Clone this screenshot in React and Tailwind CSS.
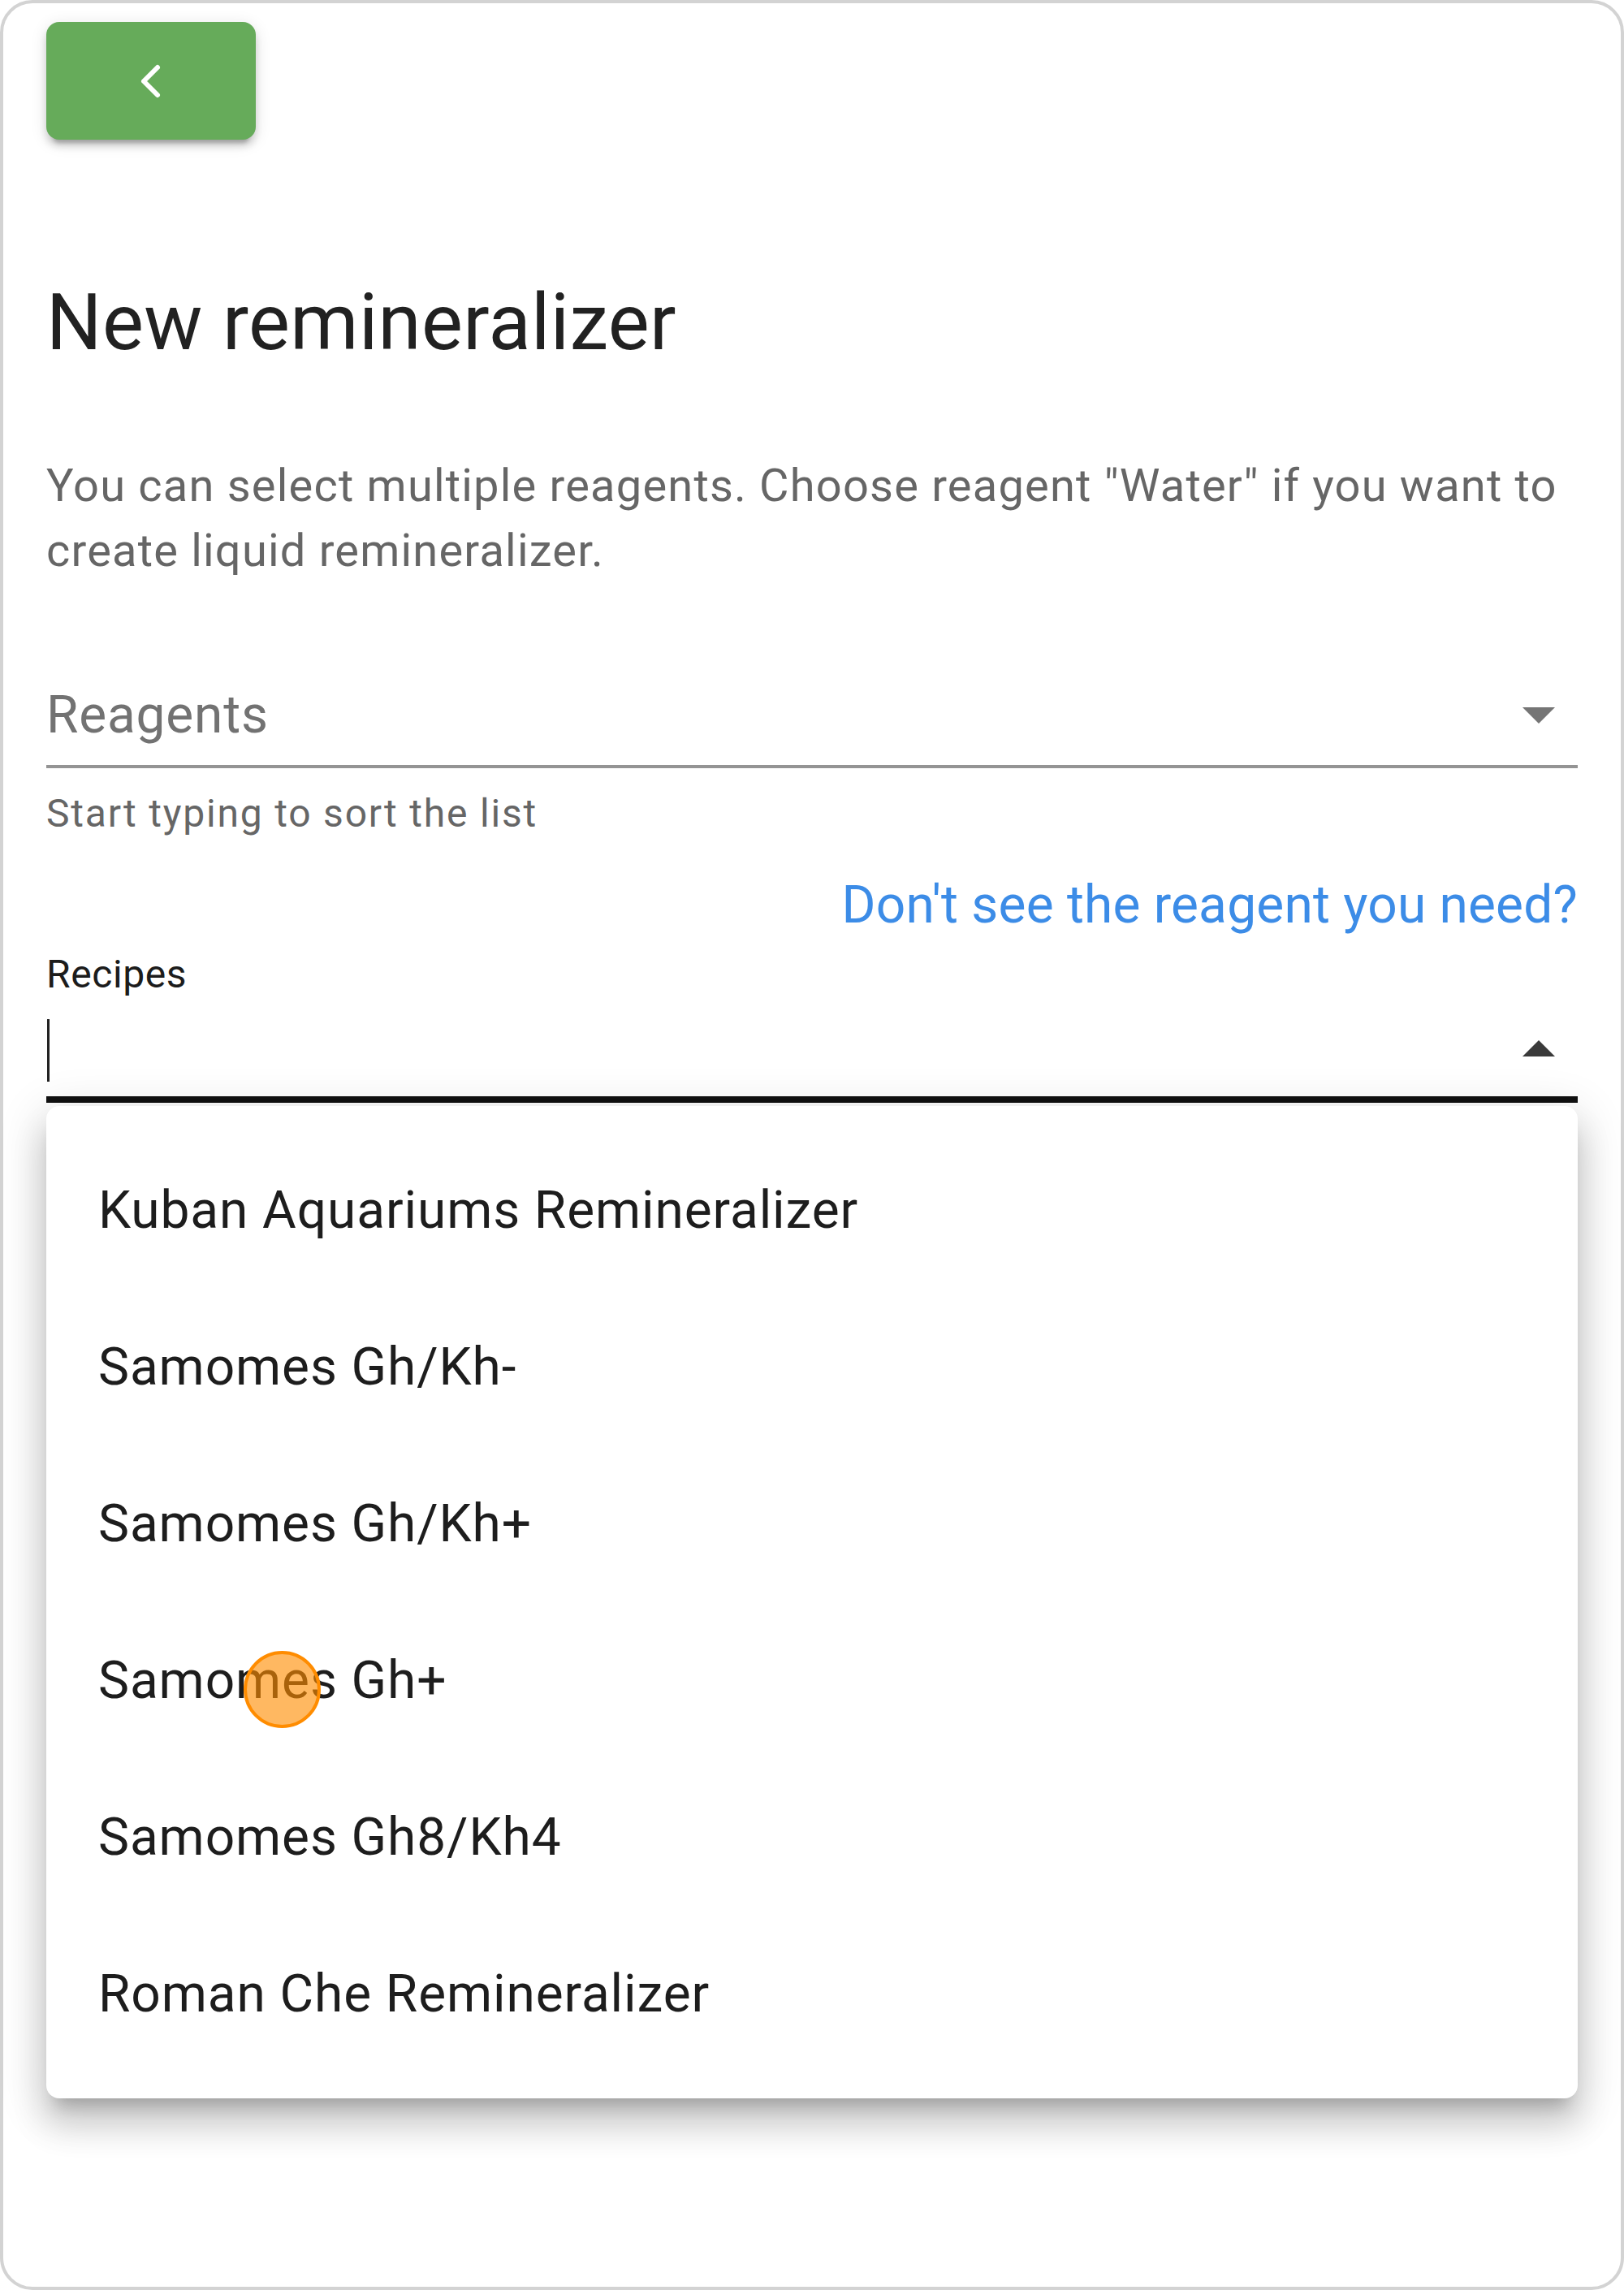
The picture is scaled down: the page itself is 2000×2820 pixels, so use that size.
import React from "react";

const recipes = [
  "Kuban Aquariums Remineralizer",
  "Samomes Gh/Kh-",
  "Samomes Gh/Kh+",
  "Samomes Gh+",
  "Samomes Gh8/Kh4",
  "Roman Che Remineralizer",
];

function BackButton() {
  return (
    <button className="flex h-[145px] w-[258px] items-center justify-center rounded-[16px] bg-[#66ab5a] shadow-[0_12px_4px_-8px_rgba(0,0,0,0.2),0_8px_8px_0_rgba(0,0,0,0.14),0_4px_20px_0_rgba(0,0,0,0.12)]">
      <svg width="30" height="44" viewBox="0 0 30 44" fill="none" className="-ml-[2px]">
        <path
          d="M24 5 L7 22 L24 39"
          stroke="#ffffff"
          strokeWidth="6"
          strokeLinecap="round"
          strokeLinejoin="round"
        />
      </svg>
    </button>
  );
}

function Caret({ up, color }) {
  return (
    <svg width="40" height="20" viewBox="0 0 40 20">
      {up ? (
        <polygon points="0,20 40,20 20,0" fill={color} />
      ) : (
        <polygon points="0,0 40,0 20,20" fill={color} />
      )}
    </svg>
  );
}

export default function App() {
  return (
    <div className="relative h-[2820px] w-[2000px] rounded-[40px] border-4 border-[#d3d3d3] bg-white px-[53px] pt-[23px] font-['Roboto',sans-serif]">
      <BackButton />

      {/* Title */}
      <h1 className="mt-[161px] text-[96px] leading-[128px] font-normal tracking-[0.4px] text-[#212121]">
        New remineralizer
      </h1>

      {/* Description */}
      <p className="mt-[97px] text-[56px] leading-[80px] tracking-[1.2px] text-[#666666]">
        You can select multiple reagents. Choose reagent "Water" if you want to
        create liquid remineralizer.
      </p>

      {/* Reagents select */}
      <div className="mt-[115px] border-b-4 border-[#949494] pb-[13px]">
        <div className="flex h-[96px] items-center justify-between pr-[28px]">
          <span className="text-[64px] leading-[96px] tracking-[0.8px] text-[#727272]">
            Reagents
          </span>
          <Caret color="#757575" />
        </div>
      </div>
      <p className="mt-[24px] text-[48px] leading-[64px] tracking-[1.8px] text-[#666666]">
        Start typing to sort the list
      </p>

      {/* Link */}
      <div className="mt-[33px] flex justify-end">
        <a className="text-[64px] leading-[96px] tracking-[0.2px] text-[#3c8ce7]">
          Don't see the reagent you need?
        </a>
      </div>

      {/* Recipes autocomplete (focused, open) */}
      <div className="relative mt-[5px]">
        <label className="block text-[48px] leading-[64px] tracking-[0.6px] text-[#1c1c1c]">
          Recipes
        </label>
        <div className="flex h-[126px] items-center justify-between border-b-8 border-[#111111] pr-[28px]">
          <span className="mt-[4px] ml-[1px] block h-[77px] w-[3px] bg-[#222222]" />
          <Caret up color="#3a3a3a" />
        </div>

        {/* Dropdown menu */}
        <ul className="absolute top-full right-0 left-0 mt-[4px] rounded-[16px] bg-white py-[32px] shadow-[0_20px_20px_-12px_rgba(0,0,0,0.2),0_32px_40px_4px_rgba(0,0,0,0.14),0_12px_56px_8px_rgba(0,0,0,0.12)]">
          {recipes.map((r) => (
            <li
              key={r}
              className="flex h-[193px] items-center px-[64px] text-[64px] tracking-[0.9px] text-[#1d1d1d]"
            >
              {r}
            </li>
          ))}
        </ul>
      </div>

      {/* Touch indicator */}
      <div className="absolute top-[2029px] left-[296px] h-[95px] w-[95px] rounded-full border-4 border-[#ff8c00] bg-[rgba(255,140,0,0.62)]" />
    </div>
  );
}
